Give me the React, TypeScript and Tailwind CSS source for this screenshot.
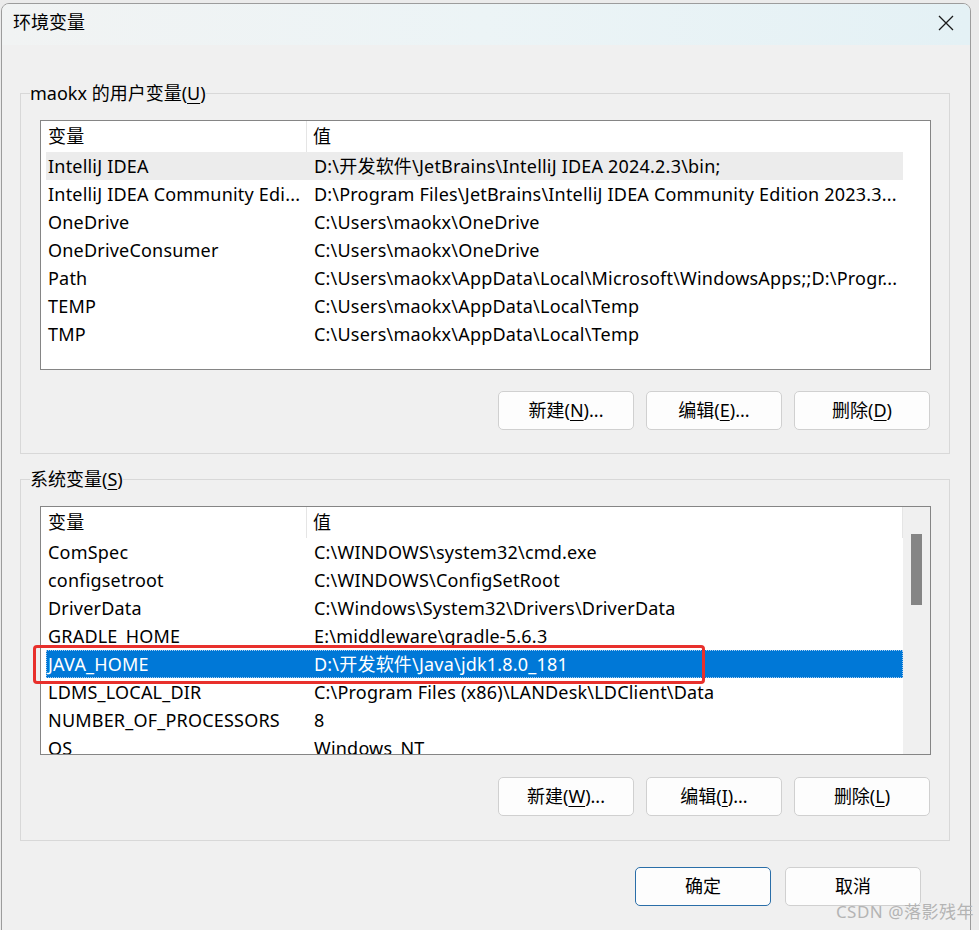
import React from 'react';

type Row = { name: string; value: string; state?: 'hover' | 'selected' };

const userVars: Row[] = [
  { name: 'IntelliJ IDEA', value: 'D:\\开发软件\\JetBrains\\IntelliJ IDEA 2024.2.3\\bin;', state: 'hover' },
  { name: 'IntelliJ IDEA Community Edi...', value: 'D:\\Program Files\\JetBrains\\IntelliJ IDEA Community Edition 2023.3...' },
  { name: 'OneDrive', value: 'C:\\Users\\maokx\\OneDrive' },
  { name: 'OneDriveConsumer', value: 'C:\\Users\\maokx\\OneDrive' },
  { name: 'Path', value: 'C:\\Users\\maokx\\AppData\\Local\\Microsoft\\WindowsApps;;D:\\Progr...' },
  { name: 'TEMP', value: 'C:\\Users\\maokx\\AppData\\Local\\Temp' },
  { name: 'TMP', value: 'C:\\Users\\maokx\\AppData\\Local\\Temp' },
];

const systemVars: Row[] = [
  { name: 'ComSpec', value: 'C:\\WINDOWS\\system32\\cmd.exe' },
  { name: 'configsetroot', value: 'C:\\WINDOWS\\ConfigSetRoot' },
  { name: 'DriverData', value: 'C:\\Windows\\System32\\Drivers\\DriverData' },
  { name: 'GRADLE_HOME', value: 'E:\\middleware\\gradle-5.6.3' },
  { name: 'JAVA_HOME', value: 'D:\\开发软件\\Java\\jdk1.8.0_181', state: 'selected' },
  { name: 'LDMS_LOCAL_DIR', value: 'C:\\Program Files (x86)\\LANDesk\\LDClient\\Data' },
  { name: 'NUMBER_OF_PROCESSORS', value: '8' },
  { name: 'OS', value: 'Windows_NT' },
];

function Key({ k }: { k: string }) {
  return <u className="underline-offset-[3px] decoration-1">{k}</u>;
}

function VarList({ rows, scroll, height }: { rows: Row[]; scroll?: boolean; height: string }) {
  return (
    <div className={`flex border border-[#858585] bg-white overflow-hidden tracking-[0.2px] ${height}`}>
      <div className="flex-1 pl-[5px] min-w-0">
        {/* Column header */}
        <div className={`flex h-[31px] leading-[31px] ${scroll ? 'border-r border-[#e5e5e5]' : ''}`}>
          <div className="w-[261px] pl-[2px] border-r border-[#e5e5e5]">变量</div>
          <div className="pl-[6px]">值</div>
        </div>
        {rows.map((r) => (
          <div
            key={r.name}
            className={`flex h-[28px] leading-[28px] whitespace-nowrap ${
              r.state === 'selected'
                ? 'bg-[#0078d7] text-white outline-1 outline-dotted outline-[#a8cdf0] -outline-offset-1'
                : r.state === 'hover'
                  ? 'bg-[#ececec]'
                  : ''
            }`}
          >
            <div className="w-[266px] shrink-0 pl-[2px] overflow-hidden">{r.name}</div>
            <div className="pl-[2px] overflow-hidden">{r.value}</div>
          </div>
        ))}
      </div>
      <div className={`w-[27px] shrink-0 ${scroll ? 'bg-[#f0f0f0] pt-[27px] pl-[8px]' : ''}`}>
        {scroll && <div className="w-[11px] h-[71px] bg-[#858585]" />}
      </div>
    </div>
  );
}

function Btn({ children, primary }: { children: React.ReactNode; primary?: boolean }) {
  return (
    <button
      type="button"
      className={`w-[136px] h-[39px] rounded-[5px] bg-[#fdfdfd] text-[18px] text-black border ${
        primary ? 'border-[#2a6ea8]' : 'border-[#d0d0d0]'
      }`}
    >
      {children}
    </button>
  );
}

export default function App() {
  return (
    <div className="relative w-[979px] h-[930px] overflow-hidden bg-[#ebebeb] pl-[1px] pt-[3px] font-['Noto_Sans','Noto_Sans_CJK_SC',sans-serif] text-[18px] text-black">
      {/* Dialog window */}
      <div className="w-[970px] h-[935px] rounded-[8px] border border-[#9c9c9c] bg-[#f0f0f0] overflow-hidden">
        {/* Title bar */}
        <div className="h-[41px] flex items-center justify-between pl-[11px] pr-[16px] pb-[5px] bg-gradient-to-r from-[#f1f3f3] via-[#ecf4f6] to-[#e4f1f5]">
          <span className="leading-none">环境变量</span>
          <svg width="16" height="16" viewBox="0 0 16 16" className="mt-[1px]">
            <path d="M1 1 L15 15 M15 1 L1 15" stroke="#1a1a1a" strokeWidth="1.3" />
          </svg>
        </div>

        {/* User variables */}
        <fieldset className="ml-[18px] mt-[36px] w-[930px] border border-[#d8d8d8]">
          <legend className="ml-[9px] leading-[24px]">
            maokx 的用户变量(<Key k="U" />)
          </legend>
          <div className="pl-[19px] pr-[18px] pt-[15px] pb-[23px]">
            <VarList rows={userVars} height="h-[250px]" />
            <div className="flex justify-end gap-[12px] mt-[21px] mr-[1px]">
              <Btn>
                新建(<Key k="N" />)...
              </Btn>
              <Btn>
                编辑(<Key k="E" />)...
              </Btn>
              <Btn>
                删除(<Key k="D" />)
              </Btn>
            </div>
          </div>
        </fieldset>

        {/* System variables */}
        <fieldset className="ml-[18px] mt-[13px] w-[930px] border border-[#d8d8d8]">
          <legend className="ml-[9px] leading-[24px]">
            系统变量(<Key k="S" />)
          </legend>
          <div className="pl-[19px] pr-[18px] pt-[15px] pb-[24px]">
            <VarList rows={systemVars} scroll height="h-[249px]" />
            <div className="flex justify-end gap-[12px] mt-[22px] mr-[1px]">
              <Btn>
                新建(<Key k="W" />)...
              </Btn>
              <Btn>
                编辑(<Key k="I" />)...
              </Btn>
              <Btn>
                删除(<Key k="L" />)
              </Btn>
            </div>
          </div>
        </fieldset>

        {/* Dialog buttons */}
        <div className="flex justify-end gap-[14px] pr-[49px] mt-[26px]">
          <Btn primary>确定</Btn>
          <Btn>取消</Btn>
        </div>
      </div>

      {/* Red annotation box */}
      <div className="absolute left-[33px] top-[645px] w-[672px] h-[39px] rounded-[4px] border-[3px] border-[#e8302c]" />

      {/* Watermark */}
      <div className="absolute right-[5px] bottom-[6px] text-[17px] text-[#b4b4b4] tracking-[0.5px]">CSDN @落影残年</div>
    </div>
  );
}
